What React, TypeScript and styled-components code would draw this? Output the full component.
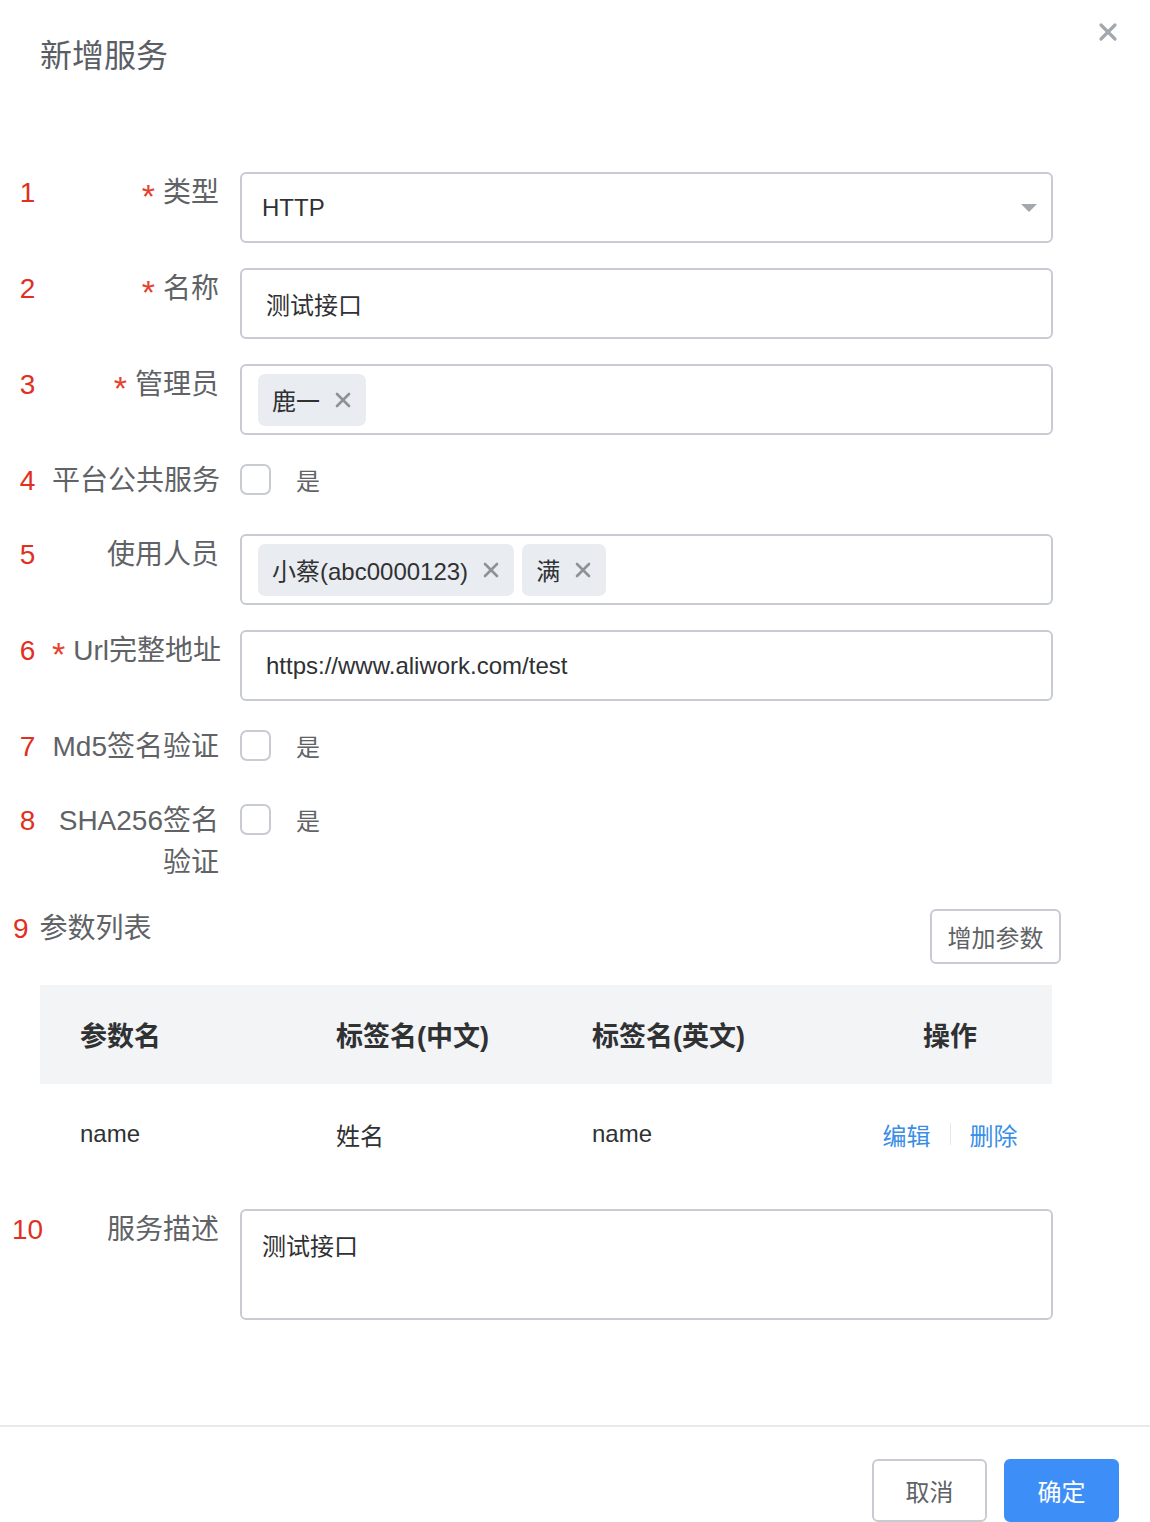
import React from "react";
import styled, { createGlobalStyle } from "styled-components";

const GlobalStyle = createGlobalStyle`
  html, body {
    margin: 0;
    padding: 0;
    background: #ffffff;
  }
  body {
    font-family: "Liberation Sans", "Noto Sans CJK SC", sans-serif;
    color: #303133;
  }
  * { box-sizing: border-box; }
`;

const Dialog = styled.div`
  width: 1150px;
  background: #fff;
  display: flex;
  flex-direction: column;
`;

const Header = styled.div`
  display: flex;
  justify-content: space-between;
  align-items: flex-start;
  padding: 22px 32px 0 40px;
`;

const Title = styled.h2`
  margin: 18px 0 0;
  font-size: 32px;
  line-height: 32px;
  font-weight: 400;
  color: #5b5e64;
`;

const CloseBtn = styled.button`
  width: 20px;
  height: 20px;
  padding: 0;
  border: none;
  background: transparent;
  display: flex;
  align-items: center;
  justify-content: center;
  cursor: pointer;
`;

const Form = styled.div`
  display: flex;
  flex-direction: column;
  gap: 25px;
  padding-top: 100px;
`;

const Row = styled.div<{ $minH?: number }>`
  display: grid;
  grid-template-columns: 52px 188px 813px;
  align-items: start;
  min-height: ${(p) => (p.$minH ? `${p.$minH}px` : "auto")};
`;

const Num = styled.div`
  font-size: 28px;
  line-height: 42px;
  color: #e1301f;
  text-align: center;
  padding-left: 3px;
`;

const Label = styled.div`
  font-size: 28px;
  line-height: 42px;
  color: #606266;
  text-align: right;
  padding-right: 21px;
  white-space: nowrap;
`;

const Star = styled.span`
  display: inline-block;
  color: #e5412c;
  font-size: 34px;
  line-height: 34px;
  vertical-align: -6px;
  margin-right: 8px;
`;

const Box = styled.div<{ $h?: number; $pl?: number }>`
  height: ${(p) => p.$h ?? 71}px;
  border: 2px solid #c8ccd2;
  border-radius: 6px;
  background: #fff;
  display: flex;
  align-items: center;
  padding-left: ${(p) => p.$pl ?? 24}px;
  padding-right: 14px;
  font-size: 24px;
  color: #303133;
`;

const SelectText = styled.span`
  flex: 1;
`;

const Caret = styled.span`
  width: 0;
  height: 0;
  border-left: 8px solid transparent;
  border-right: 8px solid transparent;
  border-top: 8px solid #a3a7ae;
`;

const TagBox = styled(Box)`
  padding-left: 16px;
  gap: 8px;
`;

const Tag = styled.span`
  height: 52px;
  display: inline-flex;
  align-items: center;
  gap: 15px;
  padding: 0 15px 0 14px;
  background: #e9ecf0;
  border-radius: 7px;
  font-size: 24px;
  color: #303133;
`;

const TextArea = styled.div`
  height: 111px;
  border: 2px solid #c8ccd2;
  border-radius: 6px;
  padding: 19px 20px;
  font-size: 24px;
  line-height: 34px;
  color: #303133;
`;

const CheckLine = styled.div`
  height: 38px;
  display: flex;
  align-items: center;
  gap: 25px;
  font-size: 24px;
  color: #606266;
`;

const Check = styled.span`
  width: 31px;
  height: 31px;
  border: 2px solid #c8ccd2;
  border-radius: 7px;
  background: #fff;
`;

const ParamHead = styled.div`
  display: flex;
  justify-content: space-between;
  align-items: flex-start;
  padding: 0 89px 0 13px;
`;

const ParamTitle = styled.div`
  display: flex;
  align-items: center;
  gap: 11px;
  margin-top: -1px;
  font-size: 28px;
  line-height: 42px;
  color: #606266;
`;

const ParamNum = styled.span`
  color: #e1301f;
`;

const Button = styled.button<{ $primary?: boolean }>`
  height: ${(p) => (p.$primary !== undefined ? 63 : 55)}px;
  padding: 0;
  width: ${(p) => (p.$primary !== undefined ? 115 : 131)}px;
  border-radius: 6px;
  border: 2px solid ${(p) => (p.$primary ? "#3e8ef7" : "#c8ccd2")};
  background: ${(p) => (p.$primary ? "#3e8ef7" : "#fff")};
  color: ${(p) => (p.$primary ? "#fff" : "#606266")};
  font-family: inherit;
  font-size: 24px;
  cursor: pointer;
`;

const Table = styled.div`
  margin: -4px 0 0 40px;
  width: 1012px;
  display: grid;
  grid-template-columns: 256px 256px 256px 244px;
`;

const HeadCell = styled.div<{ $center?: boolean }>`
  height: 99px;
  background: #f2f4f6;
  display: flex;
  align-items: center;
  justify-content: ${(p) => (p.$center ? "center" : "flex-start")};
  padding-left: 40px;
  font-size: 27px;
  font-weight: 700;
  color: #303133;
`;

const Cell = styled.div<{ $center?: boolean }>`
  height: 100px;
  display: flex;
  align-items: center;
  justify-content: ${(p) => (p.$center ? "center" : "flex-start")};
  padding-left: 40px;
  font-size: 24px;
  color: #303133;
`;

const Link = styled.a`
  color: #3a8ee6;
  font-size: 24px;
  text-decoration: none;
  cursor: pointer;
`;

const Divider = styled.span`
  width: 1px;
  height: 22px;
  background: #e4e7ed;
  margin: 0 19px;
`;

const Footer = styled.div`
  margin-top: 105px;
  border-top: 2px solid #e8eaed;
  padding: 32px 31px 0;
  display: flex;
  justify-content: flex-end;
  gap: 17px;
`;

const CloseIcon = () => (
  <svg width="20" height="20" viewBox="0 0 20 20">
    <path d="M3 3 L17 17 M17 3 L3 17" stroke="#a3a7ae" strokeWidth="3.2" strokeLinecap="round" />
  </svg>
);

const TagClose = () => (
  <svg width="16" height="16" viewBox="0 0 16 16">
    <path d="M2 2 L14 14 M14 2 L2 14" stroke="#8e9196" strokeWidth="2.6" strokeLinecap="round" />
  </svg>
);

export default function App() {
  return (
    <>
      <GlobalStyle />
      <Dialog>
        <Header>
          <Title>新增服务</Title>
          <CloseBtn aria-label="close">
            <CloseIcon />
          </CloseBtn>
        </Header>

        <Form>
          <Row>
            <Num>1</Num>
            <Label>
              <Star>*</Star>类型
            </Label>
            <Box $pl={20}>
              <SelectText>HTTP</SelectText>
              <Caret />
            </Box>
          </Row>

          <Row>
            <Num>2</Num>
            <Label>
              <Star>*</Star>名称
            </Label>
            <Box>测试接口</Box>
          </Row>

          <Row>
            <Num>3</Num>
            <Label>
              <Star>*</Star>管理员
            </Label>
            <TagBox>
              <Tag>
                鹿一 <TagClose />
              </Tag>
            </TagBox>
          </Row>

          <Row $minH={49}>
            <Num>4</Num>
            <Label>平台公共服务</Label>
            <CheckLine>
              <Check />
              是
            </CheckLine>
          </Row>

          <Row>
            <Num>5</Num>
            <Label>使用人员</Label>
            <TagBox>
              <Tag>
                小蔡(abc0000123) <TagClose />
              </Tag>
              <Tag>
                满 <TagClose />
              </Tag>
            </TagBox>
          </Row>

          <Row>
            <Num>6</Num>
            <Label>
              <Star>*</Star>Url完整地址
            </Label>
            <Box>https://www.aliwork.com/test</Box>
          </Row>

          <Row $minH={49}>
            <Num>7</Num>
            <Label>Md5签名验证</Label>
            <CheckLine>
              <Check />
              是
            </CheckLine>
          </Row>

          <Row>
            <Num>8</Num>
            <Label>
              SHA256签名
              <br />
              验证
            </Label>
            <CheckLine>
              <Check />
              是
            </CheckLine>
          </Row>

          <ParamHead>
            <ParamTitle>
              <ParamNum>9</ParamNum>
              参数列表
            </ParamTitle>
            <Button>增加参数</Button>
          </ParamHead>

          <Table>
            <HeadCell>参数名</HeadCell>
            <HeadCell>标签名(中文)</HeadCell>
            <HeadCell>标签名(英文)</HeadCell>
            <HeadCell $center>操作</HeadCell>
            <Cell>name</Cell>
            <Cell>姓名</Cell>
            <Cell>name</Cell>
            <Cell $center>
              <Link>编辑</Link>
              <Divider />
              <Link>删除</Link>
            </Cell>
          </Table>

          <Row>
            <Num>10</Num>
            <Label>服务描述</Label>
            <TextArea>测试接口</TextArea>
          </Row>
        </Form>

        <Footer>
          <Button $primary={false}>取消</Button>
          <Button $primary>确定</Button>
        </Footer>
      </Dialog>
    </>
  );
}
